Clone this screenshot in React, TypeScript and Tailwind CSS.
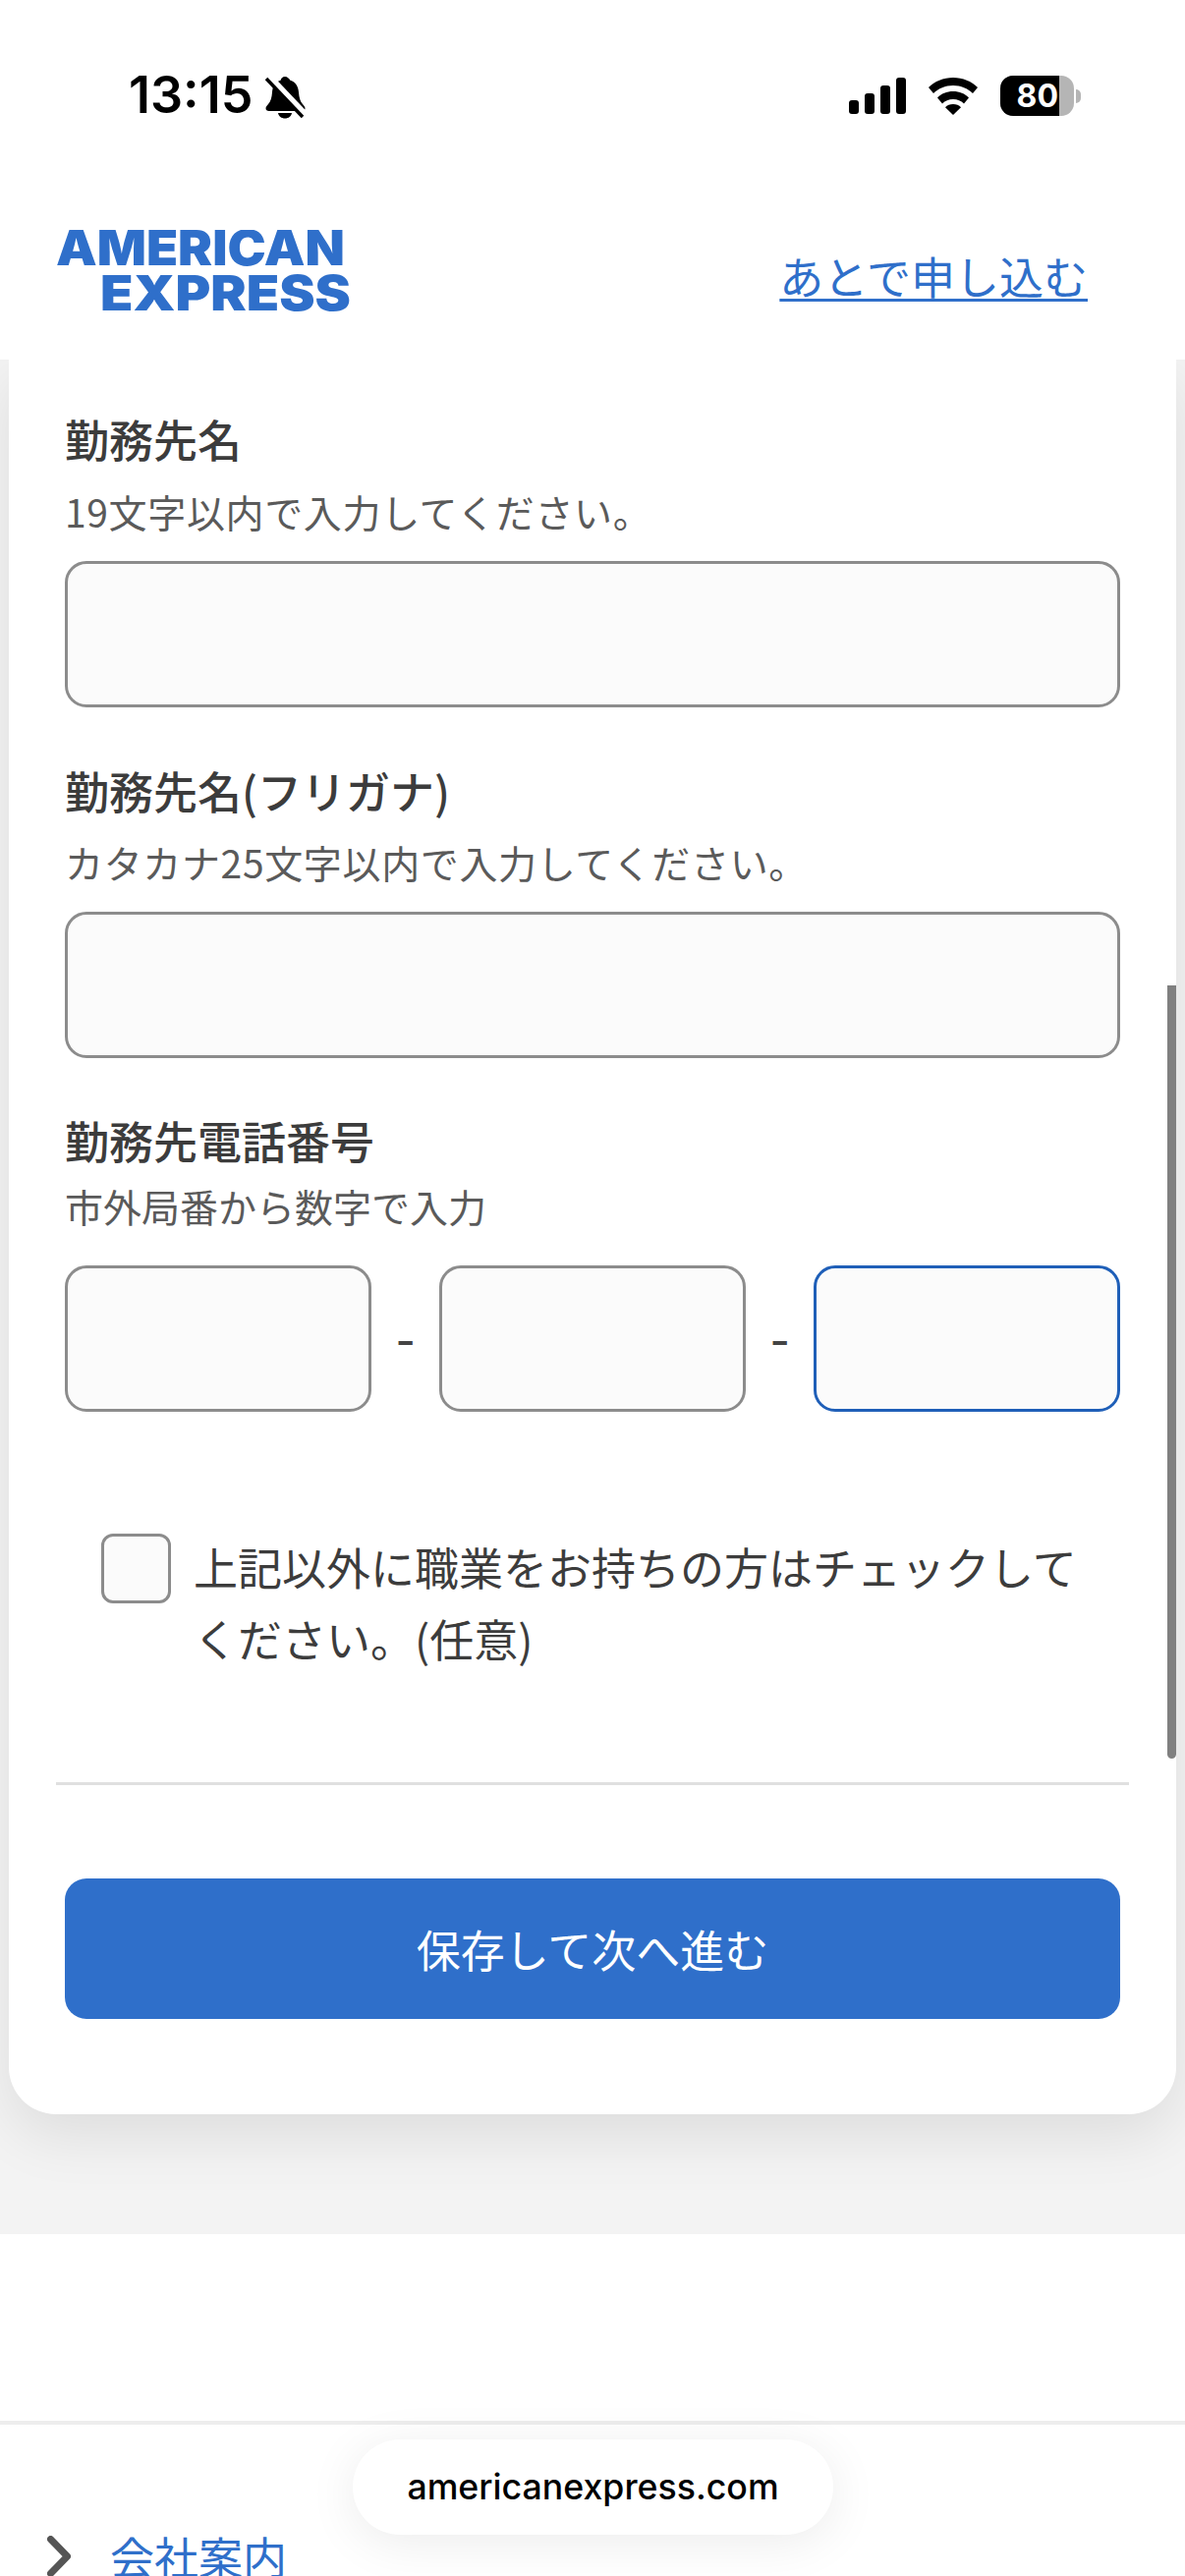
const jp = "font-['Noto_Sans_CJK_JP','Noto_Sans_CJK_SC',sans-serif]";

function Signal() {
  return (
    <svg width="58" height="37" viewBox="0 0 58 37" fill="#000">
      <rect x="0" y="23" width="10" height="14" rx="3" />
      <rect x="16" y="16" width="10" height="21" rx="3" />
      <rect x="32" y="8" width="10" height="29" rx="3" />
      <rect x="48" y="0" width="10" height="37" rx="3" />
    </svg>
  );
}

function Wifi() {
  return (
    <svg width="52" height="38" viewBox="0 0 52 38" fill="#000">
      <path d="M26 0C16 0 7.500 3.800 1 10l5 6C11 11 18 8 26 8s15 3 20 8l5-6C44.500 3.800 36 0 26 0z" />
      <path d="M26 14c-6.500 0-12 2.400-16 6.400l5 6c2.800-2.800 6.600-4.400 11-4.400s8.200 1.600 11 4.400l5-6c-4-4-9.500-6.400-16-6.400z" />
      <path d="M26 27c-3.200 0-6 1.200-8 3.200L26 38l8-7.800c-2-2-4.800-3.200-8-3.200z" />
    </svg>
  );
}

function Bell() {
  return (
    <svg width="42" height="44" viewBox="0 0 42 44">
      <path
        d="M21 1c-2.500 0-4 1.800-4.400 3.800C11 6.500 8.500 11 8 17c-.4 5.500-1.500 9-4 12-1.500 1.800-2.500 3-2.500 4.300 0 1.700 1.300 2.700 3.300 2.700h33.400c2 0 3.300-1 3.300-2.700 0-1.300-1-2.500-2.500-4.300-2.500-3-3.600-6.500-4-12-.5-6-3-10.500-8.600-12.200C25 2.800 23.500 1 21 1z"
        fill="#000"
      />
      <path d="M14 38h14c-.5 3.300-3.400 5.500-7 5.500s-6.500-2.200-7-5.500z" fill="#000" />
      <path d="M3 0l38 40" stroke="#fff" strokeWidth="8" />
      <path d="M2 3l37 39" stroke="#000" strokeWidth="3.500" />
    </svg>
  );
}

function Logo() {
  return (
    <svg width="302" height="84" viewBox="0 0 302 84" fill="#2f6fca" className="block">
      <text
        x="0"
        y="36"
        fontFamily="Inter, sans-serif"
        fontWeight="900"
        fontSize="49.500"
        textLength="294"
        lengthAdjust="spacingAndGlyphs"
      >
        AMERICAN
      </text>
      <text
        x="45"
        y="82"
        fontFamily="Inter, sans-serif"
        fontWeight="900"
        fontSize="49.500"
        textLength="255"
        lengthAdjust="spacingAndGlyphs"
      >
        EXPRESS
      </text>
    </svg>
  );
}

function Input({ focus, className }: { focus?: boolean; className?: string }) {
  return (
    <div
      className={
        "h-[149px] rounded-[22px] border-[3px] bg-[#fbfbfb] " +
        (focus ? "border-[#1f5fb8] " : "border-[#8c8c8c] ") +
        (className ?? "")
      }
    />
  );
}

export default function App() {
  return (
    <div className={"relative flex h-[2622px] w-[1206px] flex-col overflow-hidden bg-white " + jp}>
      <header className="relative z-10 h-[366px] shrink-0 bg-white">
        <div className="flex h-[190px] items-start justify-between pl-[131px] pr-[106px] pt-[72px]">
          <div className="flex items-center gap-[12px]">
            <span className="font-['Inter',sans-serif] text-[52px] font-semibold leading-[50px] text-black">13:15</span>
            <div className="mt-[3px]">
              <Bell />
            </div>
          </div>
          <div className="mt-[5px] flex items-center">
            <Signal />
            <div className="ml-[22px]">
              <Wifi />
            </div>
            <div className="ml-[22px] flex items-center">
              <div className="flex h-[41px] w-[75px] overflow-hidden rounded-[13px] bg-[#b5b5b5]">
                <div className="flex w-[60px] items-center justify-end bg-black pr-[1px] font-['Inter',sans-serif] text-[32px] font-bold leading-none text-white">
                  80
                </div>
              </div>
              <div className="ml-[2px] h-[14px] w-[5px] rounded-r-full bg-[#b5b5b5]" />
            </div>
          </div>
        </div>
        <nav className="flex items-start justify-between pl-[57px] pr-[99px] pt-[44px]">
          <Logo />
          <a className="mt-[17px] text-[45px] leading-[60px] text-[#2f6fca] underline decoration-[3px] underline-offset-[4px]">
            あとで申し込む
          </a>
        </nav>
      </header>

      <main className="relative h-[1908px] shrink-0 bg-[#f3f3f3] px-[9px]">
        <div className="h-[1786px] rounded-b-[48px] bg-white px-[57px] pt-[51px] shadow-[0_22px_60px_rgba(0,0,0,0.09)]">
          <h2 className="text-[45px] font-medium leading-[60px] text-[#3c3c3c]">勤務先名</h2>
          <p className="mt-[18px] text-[39px] leading-[50px] tracking-[0.65px] text-[#5a5a5a]">19文字以内で入力してください。</p>
          <Input className="mt-[26px]" />

          <h2 className="mt-[55px] text-[45px] font-medium leading-[60px] text-[#3c3c3c]">勤務先名(フリガナ)</h2>
          <p className="mt-[17px] text-[39px] leading-[50px] tracking-[0.65px] text-[#5a5a5a]">カタカナ25文字以内で入力してください。</p>
          <Input className="mt-[26px]" />

          <h2 className="mt-[54px] text-[45px] font-medium leading-[60px] text-[#3c3c3c]">勤務先電話番号</h2>
          <p className="mt-[11px] text-[39px] leading-[50px] text-[#5a5a5a]">市外局番から数字で入力</p>
          <div className="mt-[36px] flex items-center justify-between">
            <Input className="w-[312px]" />
            <span className="mb-[-4px] w-[20px] text-center font-['Inter',sans-serif] text-[44px] font-medium leading-none text-[#444]">-</span>
            <Input className="w-[312px]" />
            <span className="mb-[-4px] w-[20px] text-center font-['Inter',sans-serif] text-[44px] font-medium leading-none text-[#444]">-</span>
            <Input focus className="w-[312px]" />
          </div>

          <div className="mt-[124px] flex items-start gap-[23px] pl-[37px]">
            <div className="h-[71px] w-[71px] shrink-0 rounded-[12px] border-[3px] border-[#8c8c8c] bg-[#fbfbfb]" />
            <p className="-mt-[3px] w-[910px] text-[45px] leading-[73px] text-[#3c3c3c]">
              上記以外に職業をお持ちの方はチェックしてください。(任意)
            </p>
          </div>

          <div className="-mx-[9px] mt-[110px] h-[3px] bg-[#e0e0e0]" />

          <button className="mt-[95px] flex h-[143px] w-full items-center justify-center rounded-[22px] bg-[#2f6fca] text-[45px] leading-none text-white">
            保存して次へ進む
          </button>
        </div>
        <div className="absolute right-[9px] top-[637px] h-[787px] w-[9px] rounded-b-full bg-[#808080]" />
      </main>

      <div className="h-[190px] shrink-0 bg-white" />
      <footer className="flex-1 border-t-[4px] border-[#ededed] bg-white pl-[48px] pt-[104px]">
        <div className="flex items-center gap-[40px]">
          <svg width="24" height="42" viewBox="0 0 24 42" fill="none" stroke="#555" strokeWidth="7" strokeLinecap="round" strokeLinejoin="round" className="shrink-0">
            <path d="M3.500 3.500L20.500 21L3.500 38.500" />
          </svg>
          <a className="text-[45px] leading-[60px] text-[#2f6fca]">会社案内</a>
        </div>
      </footer>

      <div className="absolute left-[359px] top-[2483px] z-20 flex h-[97px] w-[489px] items-center justify-center rounded-[48px] bg-white font-['Inter',sans-serif] text-[35.700px] font-medium text-black shadow-[0_8px_50px_rgba(0,0,0,0.08)]">
        americanexpress.com
      </div>
    </div>
  );
}
